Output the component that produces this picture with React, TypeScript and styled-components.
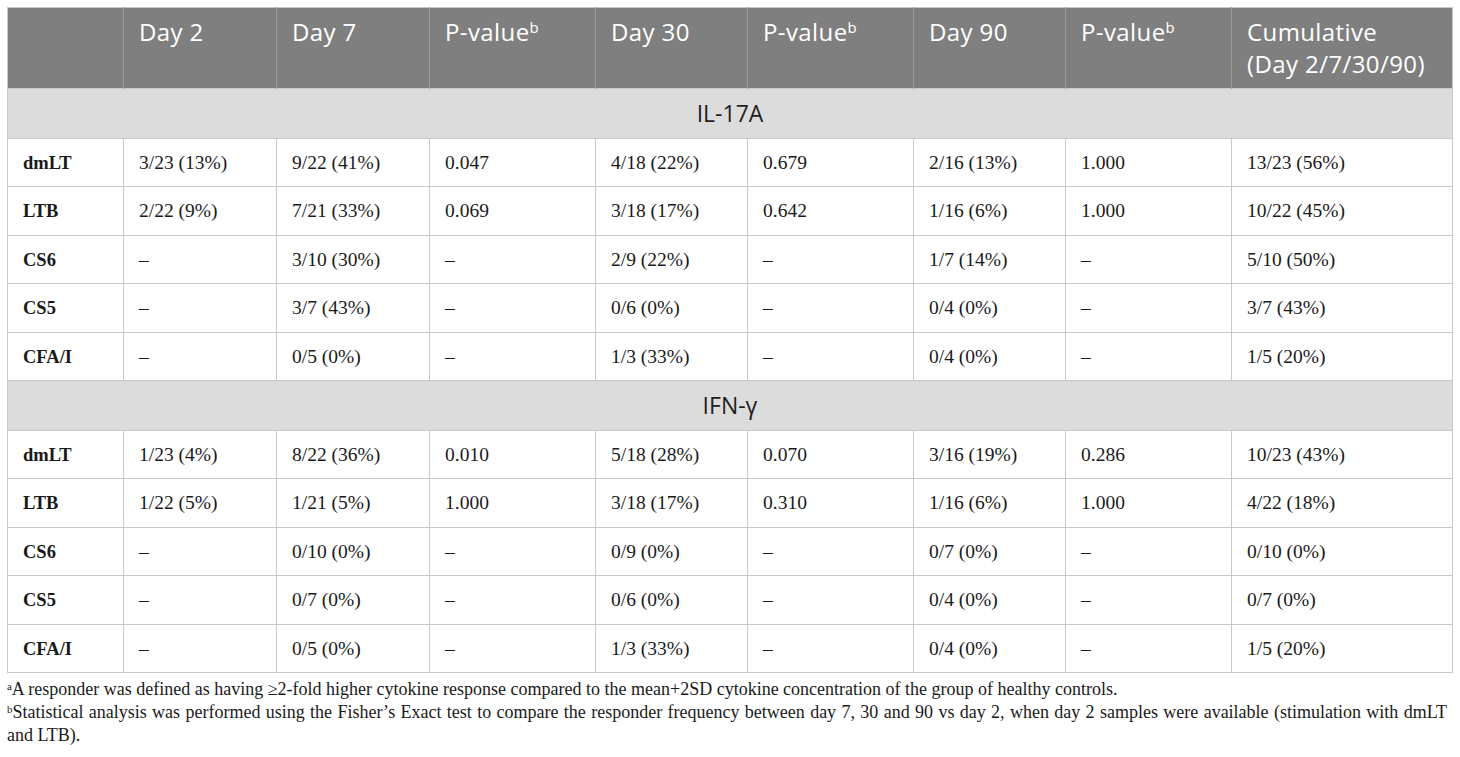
import React from "react";
import styled, { createGlobalStyle } from "styled-components";

const Global = createGlobalStyle`
  html, body { margin: 0; padding: 0; background: #ffffff; }
  body { font-family: "Liberation Serif", "Times New Roman", serif; }
`;

const Page = styled.div`
  padding: 7px 8px 0 7px;
  width: 1445px;
`;

const Table = styled.table`
  border-collapse: collapse;
  table-layout: fixed;
  width: 1445px;
  border: 1px solid #c9c9c9;
`;

const HeadCell = styled.th`
  background: #7f7f7f;
  color: #ffffff;
  font-family: "Open Sans", "Noto Sans", sans-serif;
  font-weight: 400;
  font-size: 24px;
  letter-spacing: 0.4px;
  line-height: 32px;
  text-align: left;
  vertical-align: top;
  padding: 8px 6px 8px 15px;
  height: 64px;
  border-left: 1px solid #9c9c9c;
  &:first-child { border-left: none; }
`;

const Sup = styled.sup`
  font-size: 0.62em;
  line-height: 0;
  vertical-align: 0.55em;
`;

const GroupCell = styled.td`
  background: #dcdcdc;
  color: #1e1e1e;
  font-family: "Open Sans", "Noto Sans", sans-serif;
  font-size: 23px;
  line-height: 28px;
  text-align: center;
  padding: 10px 0 11px;
  border-top: 1px solid #c9c9c9;
`;

const Cell = styled.td<{ $label?: boolean }>`
  font-family: "Liberation Serif", "Times New Roman", serif;
  font-size: ${(p) => (p.$label ? "18.5px" : "19.5px")};
  line-height: 24px;
  color: #1a1a1a;
  font-weight: ${(p) => (p.$label ? 700 : 400)};
  text-align: left;
  vertical-align: middle;
  padding: 12px 6px 11.4px 15px;
  border: 1px solid #c9c9c9;
`;

const Notes = styled.div`
  font-family: "Liberation Serif", "Times New Roman", serif;
  font-size: 18px;
  line-height: 23px;
  color: #1a1a1a;
  text-align: justify;
  padding: 5px 0 0 0;
  width: 1440px;
`;

const Note = styled.p`
  margin: 0;
`;

const NoteSup = styled.sup`
  font-size: 0.6em;
  line-height: 0;
  vertical-align: 0.5em;
`;

const widths = [116, 153, 153, 166, 152, 166, 152, 166, 221];

type Row = [string, string, string, string, string, string, string, string, string];

const il17: Row[] = [
  ["dmLT", "3/23 (13%)", "9/22 (41%)", "0.047", "4/18 (22%)", "0.679", "2/16 (13%)", "1.000", "13/23 (56%)"],
  ["LTB", "2/22 (9%)", "7/21 (33%)", "0.069", "3/18 (17%)", "0.642", "1/16 (6%)", "1.000", "10/22 (45%)"],
  ["CS6", "–", "3/10 (30%)", "–", "2/9 (22%)", "–", "1/7 (14%)", "–", "5/10 (50%)"],
  ["CS5", "–", "3/7 (43%)", "–", "0/6 (0%)", "–", "0/4 (0%)", "–", "3/7 (43%)"],
  ["CFA/I", "–", "0/5 (0%)", "–", "1/3 (33%)", "–", "0/4 (0%)", "–", "1/5 (20%)"],
];

const ifn: Row[] = [
  ["dmLT", "1/23 (4%)", "8/22 (36%)", "0.010", "5/18 (28%)", "0.070", "3/16 (19%)", "0.286", "10/23 (43%)"],
  ["LTB", "1/22 (5%)", "1/21 (5%)", "1.000", "3/18 (17%)", "0.310", "1/16 (6%)", "1.000", "4/22 (18%)"],
  ["CS6", "–", "0/10 (0%)", "–", "0/9 (0%)", "–", "0/7 (0%)", "–", "0/10 (0%)"],
  ["CS5", "–", "0/7 (0%)", "–", "0/6 (0%)", "–", "0/4 (0%)", "–", "0/7 (0%)"],
  ["CFA/I", "–", "0/5 (0%)", "–", "1/3 (33%)", "–", "0/4 (0%)", "–", "1/5 (20%)"],
];

const PValue = () => (
  <>
    P-value<Sup>b</Sup>
  </>
);

const Section: React.FC<{ title: string; rows: Row[] }> = ({ title, rows }) => (
  <>
    <tr>
      <GroupCell colSpan={9}>{title}</GroupCell>
    </tr>
    {rows.map((r) => (
      <tr key={title + r[0]}>
        {r.map((c, i) => (
          <Cell key={i} $label={i === 0}>
            {c}
          </Cell>
        ))}
      </tr>
    ))}
  </>
);

export default function App() {
  return (
    <>
      <Global />
      <Page>
        <Table>
          <colgroup>
            {widths.map((w, i) => (
              <col key={i} style={{ width: w }} />
            ))}
          </colgroup>
          <thead>
            <tr>
              <HeadCell />
              <HeadCell>Day 2</HeadCell>
              <HeadCell>Day 7</HeadCell>
              <HeadCell>
                <PValue />
              </HeadCell>
              <HeadCell>Day 30</HeadCell>
              <HeadCell>
                <PValue />
              </HeadCell>
              <HeadCell>Day 90</HeadCell>
              <HeadCell>
                <PValue />
              </HeadCell>
              <HeadCell>
                Cumulative
                <br />
                (Day 2/7/30/90)
              </HeadCell>
            </tr>
          </thead>
          <tbody>
            <Section title="IL-17A" rows={il17} />
            <Section title="IFN-γ" rows={ifn} />
          </tbody>
        </Table>
        <Notes>
          <Note>
            <NoteSup>a</NoteSup>A responder was defined as having ≥2-fold higher cytokine response compared to the
            mean+2SD cytokine concentration of the group of healthy controls.
          </Note>
          <Note>
            <NoteSup>b</NoteSup>Statistical analysis was performed using the Fisher’s Exact test to compare the
            responder frequency between day 7, 30 and 90 vs day 2, when day 2 samples were available (stimulation with
            dmLT and LTB).
          </Note>
        </Notes>
      </Page>
    </>
  );
}
